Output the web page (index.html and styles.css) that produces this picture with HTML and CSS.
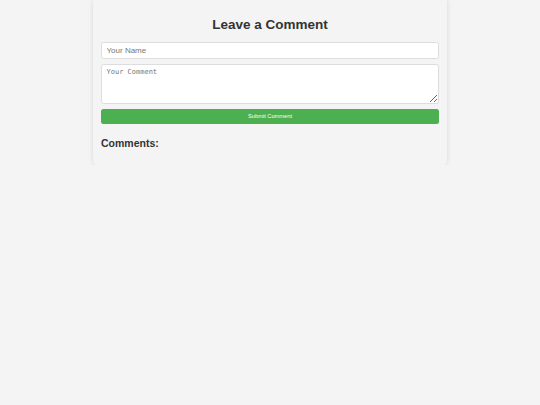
FILE: index.html
```html
<!DOCTYPE html>
<html>
<head>
<meta charset="utf-8">
<link rel="stylesheet" href="styles.css">
</head>
<body>
<div class="card">
  <h2 class="title">Leave a Comment</h2>
  <form class="form">
    <input class="field" type="text" placeholder="Your Name">
    <textarea class="field area" placeholder="Your Comment"></textarea>
    <button class="submit" type="button">Submit Comment</button>
  </form>
  <h3 class="subtitle">Comments:</h3>
  <div class="list"></div>
</div>
</body>
</html>
```
FILE: styles.css
```css
html, body {
  margin: 0;
  padding: 0;
  background: #f4f4f4;
  font-family: "Liberation Sans", Arial, sans-serif;
}
.card {
  box-sizing: border-box;
  width: 354px;
  margin: 0 auto;
  padding: 17px 8px 9px;
  background: #f4f4f4;
  border-radius: 0 0 4.5px 4.5px;
  box-shadow: 0 0 5px rgba(0, 0, 0, 0.12);
}
.title {
  margin: 0 0 9px;
  font-size: 13.5px;
  line-height: 16px;
  text-align: center;
  color: #333;
  font-weight: bold;
}
.form {
  display: flex;
  flex-direction: column;
  gap: 5px;
}
.field {
  box-sizing: border-box;
  width: 100%;
  height: 16.5px;
  margin: 0;
  padding: 0 4.5px;
  border: 1px solid #ddd;
  border-radius: 2.5px;
  background: #fff;
  font-family: "Liberation Sans", Arial, sans-serif;
  font-size: 8px;
  color: #333;
  outline: none;
}
.field::placeholder {
  color: #777;
}
.area {
  height: 40.5px;
  padding: 3px 4.5px;
  font-family: "DejaVu Sans Mono", monospace;
  font-size: 7px;
  resize: vertical;
}
.submit {
  height: 14.5px;
  margin: 0;
  padding: 0;
  border: none;
  border-radius: 2.5px;
  background: #4caf50;
  color: #fff;
  font-family: "Liberation Sans", Arial, sans-serif;
  font-size: 5.7px;
}
.subtitle {
  margin: 13px 0 0;
  font-size: 10.5px;
  line-height: 13px;
  color: #333;
  font-weight: bold;
}
.list {
  height: 6.5px;
}
```
